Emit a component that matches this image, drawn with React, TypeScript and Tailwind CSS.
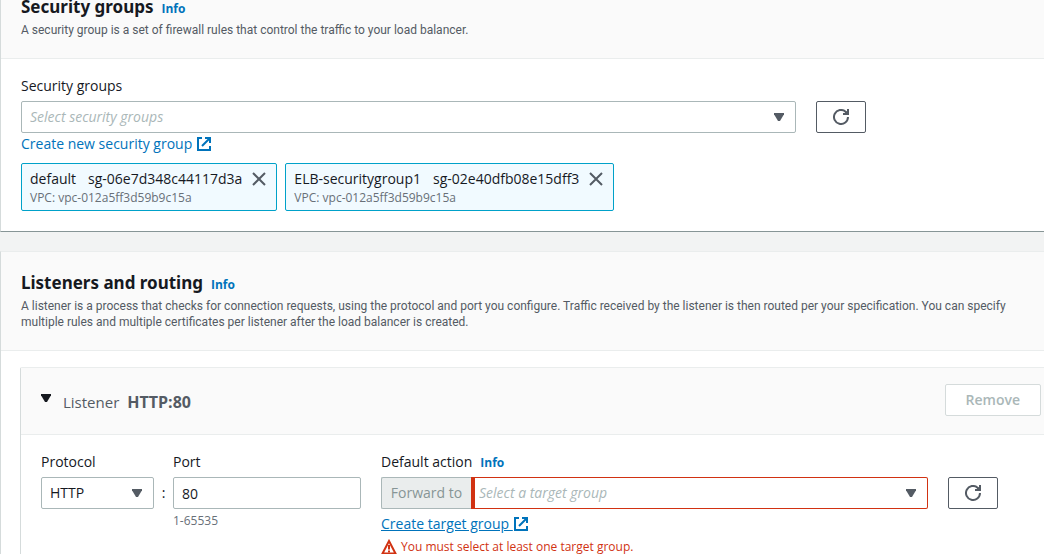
import type { ReactNode } from "react";

function Caret({ className }: { className: string }) {
  return (
    <svg viewBox="0 0 10 8" className={`h-2 w-[10px] ${className}`} aria-hidden="true">
      <path d="M0 0h10v1.2L6 8H4L0 1.2z" fill="currentColor" />
    </svg>
  );
}

function ExternalIcon() {
  return (
    <svg viewBox="0 0 16 16" className="h-4 w-4 shrink-0" fill="none" stroke="currentColor" strokeWidth="2" aria-hidden="true">
      <path d="M6 2H2v12h12v-4" />
      <path d="M9 2h5v5M14 2L6 10" />
    </svg>
  );
}

function RefreshButton({ label }: { label: string }) {
  return (
    <button type="button" aria-label={label} className="flex h-8 w-[50px] shrink-0 items-center justify-center rounded-xs border border-[#545b64] bg-white text-[#545b64]">
      <svg viewBox="0 0 16 16" className="h-4 w-4" fill="none" stroke="currentColor" strokeWidth="2" aria-hidden="true">
        <path d="M15 8a7 7 0 1 1-2.4-5.3L15 5" />
        <path d="M15 0v5h-5" />
        <path d="M12.5 2.8L15 2v3h-3z" fill="currentColor" stroke="none" />
      </svg>
    </button>
  );
}

function Info() {
  return (
    <a href="#info" className="text-xs font-bold text-[#0073bb]">
      Info
    </a>
  );
}

function SectionHeader({ title, children }: { title: string; children: ReactNode }) {
  return (
    <header className="border-b border-[#eaeded] bg-[#fafafa] py-5 pl-5">
      <div className="flex h-[22px] items-baseline gap-2">
        <h2 className="font-['Noto_Sans',sans-serif] text-[17px] font-bold leading-[22px]">{title}</h2>
        <Info />
      </div>
      <p className="mt-1 font-['Roboto',sans-serif] text-xs leading-4 text-[#545b64]">{children}</p>
    </header>
  );
}

function Token({ name, id, vpc }: { name: string; id: string; vpc: string }) {
  return (
    <li className="flex h-12 items-start gap-[9px] rounded-xs border border-[#00a1c9] bg-[#f1faff] pl-2 pr-[9px]">
      <div className="pt-1">
        <div className="flex gap-3 text-sm leading-[22px]">
          <span>{name}</span>
          <span>{id}</span>
        </div>
        <div className="text-xs leading-4 text-[#687078]">VPC: {vpc}</div>
      </div>
      <button type="button" aria-label={`Remove ${name}`} className="mt-[7px] text-[#545b64]">
        <svg viewBox="0 0 16 16" className="h-4 w-4" fill="none" stroke="currentColor" strokeWidth="2" aria-hidden="true">
          <path d="M2 2l12 12M14 2L2 14" />
        </svg>
      </button>
    </li>
  );
}

export default function App() {
  return (
    <main className="h-screen overflow-hidden bg-[#f2f3f3] font-['Open_Sans',sans-serif] text-sm text-[#16191f]">
      <section className="-mt-[25px] border-l border-t border-b border-l-[#d5dbdb] border-t-[#eaeded] border-b-[#879596] bg-white">
        <SectionHeader title="Security groups">
          A security group is a set of firewall rules that control the traffic to your load balancer.
        </SectionHeader>
        <div className="px-5 pb-5 pt-4">
          <label htmlFor="groups" className="block leading-[22px]">Security groups</label>
          <div className="mt-1 flex gap-5 pr-[158px]">
            <div className="relative flex-1">
              <select id="groups" defaultValue="" className="h-8 w-full appearance-none rounded-xs border border-[#aab7b8] bg-white px-2 italic text-[#aab7b8]">
                <option value="">Select security groups</option>
              </select>
              <Caret className="pointer-events-none absolute right-3 top-3 text-[#545b64]" />
            </div>
            <RefreshButton label="Refresh security groups" />
          </div>
          <a href="#create-group" className="flex w-fit items-center gap-1 leading-[22px] text-[#0073bb]">
            Create new security group
            <ExternalIcon />
          </a>
          <ul className="mt-2 flex gap-2">
            <Token name="default" id="sg-06e7d348c44117d3a" vpc="vpc-012a5ff3d59b9c15a" />
            <Token name="ELB-securitygroup1" id="sg-02e40dfb08e15dff3" vpc="vpc-012a5ff3d59b9c15a" />
          </ul>
        </div>
      </section>

      <section className="mt-[19px] border-l border-t border-l-[#d5dbdb] border-t-[#eaeded] bg-white">
        <SectionHeader title="Listeners and routing">
          A listener is a process that checks for connection requests, using the protocol and port you configure. Traffic received by the listener is then routed per your specification. You can specify multiple rules and multiple certificates per listener after the load balancer is created.
        </SectionHeader>
        <div className="pl-[19px] pt-4">
          <div className="rounded-tl-xs border-l border-t border-l-[#d5dbdb] border-t-[#eaeded]">
            <div className="flex items-start justify-between border-b border-[#eaeded] bg-[#fafafa] pb-[18px] pl-5 pr-[3px] pt-4">
              <button type="button" aria-expanded="true" className="flex items-center pt-1 text-base leading-7 text-[#545b64]">
                <Caret className="mb-2 mr-3 text-[#16191f]" />
                <span className="mr-2 text-[15px]">Listener</span>
                <span className="font-bold">HTTP:80</span>
              </button>
              <button type="button" disabled className="h-8 rounded-xs border border-[#d5dbdb] bg-white px-5 font-semibold text-[#aab7b8]">
                Remove
              </button>
            </div>
            <div className="flex items-start pb-5 pl-5 pt-4">
              <div className="w-[113px]">
                <label htmlFor="protocol" className="block leading-[22px]">Protocol</label>
                <div className="relative mt-1">
                  <select id="protocol" className="h-8 w-full appearance-none rounded-xs border border-[#aab7b8] bg-white px-2">
                    <option>HTTP</option>
                  </select>
                  <Caret className="pointer-events-none absolute right-3 top-3 text-[#545b64]" />
                </div>
              </div>
              <span className="mt-[26px] w-[19px] text-center leading-8">:</span>
              <div className="w-[188px]">
                <label htmlFor="port" className="block leading-[22px]">Port</label>
                <input id="port" defaultValue="80" className="mt-1 block h-8 w-full rounded-xs border border-[#aab7b8] bg-white px-2" />
                <p className="mt-1 text-xs leading-4 text-[#687078]">1-65535</p>
              </div>
              <div className="ml-5 flex-1 pr-[46px]">
                <div className="flex items-baseline gap-2">
                  <label htmlFor="target" className="leading-[22px]">Default action</label>
                  <Info />
                </div>
                <div className="mt-1 flex">
                  <span className="flex h-8 w-[90px] shrink-0 items-center justify-center rounded-l-xs border border-r-0 border-[#aab7b8] bg-[#eaeded] text-[#879596]">
                    Forward to
                  </span>
                  <div className="relative flex-1">
                    <select id="target" defaultValue="" aria-invalid="true" aria-describedby="target-error" className="h-8 w-full appearance-none rounded-r-xs border border-l-4 border-[#d13212] bg-white px-1 italic text-[#aab7b8]">
                      <option value="">Select a target group</option>
                    </select>
                    <Caret className="pointer-events-none absolute right-3 top-3 text-[#545b64]" />
                  </div>
                  <div className="ml-5">
                    <RefreshButton label="Refresh target groups" />
                  </div>
                </div>
                <a href="#create-target" className="mt-1 flex w-fit items-center leading-[22px] text-[#0073bb] underline">
                  <span className="whitespace-pre">Create target group </span>
                  <ExternalIcon />
                </a>
                <p id="target-error" className="mt-1 flex items-center gap-1 text-xs leading-4 text-[#d13212]">
                  <svg viewBox="0 0 16 16" className="h-4 w-4 shrink-0" fill="none" stroke="currentColor" strokeWidth="2" aria-hidden="true">
                    <path d="M8 2l6.5 12.5h-13z" />
                    <path d="M8 6v4.5M8 11.5v2" />
                  </svg>
                  You must select at least one target group.
                </p>
              </div>
            </div>
          </div>
        </div>
      </section>
    </main>
  );
}
